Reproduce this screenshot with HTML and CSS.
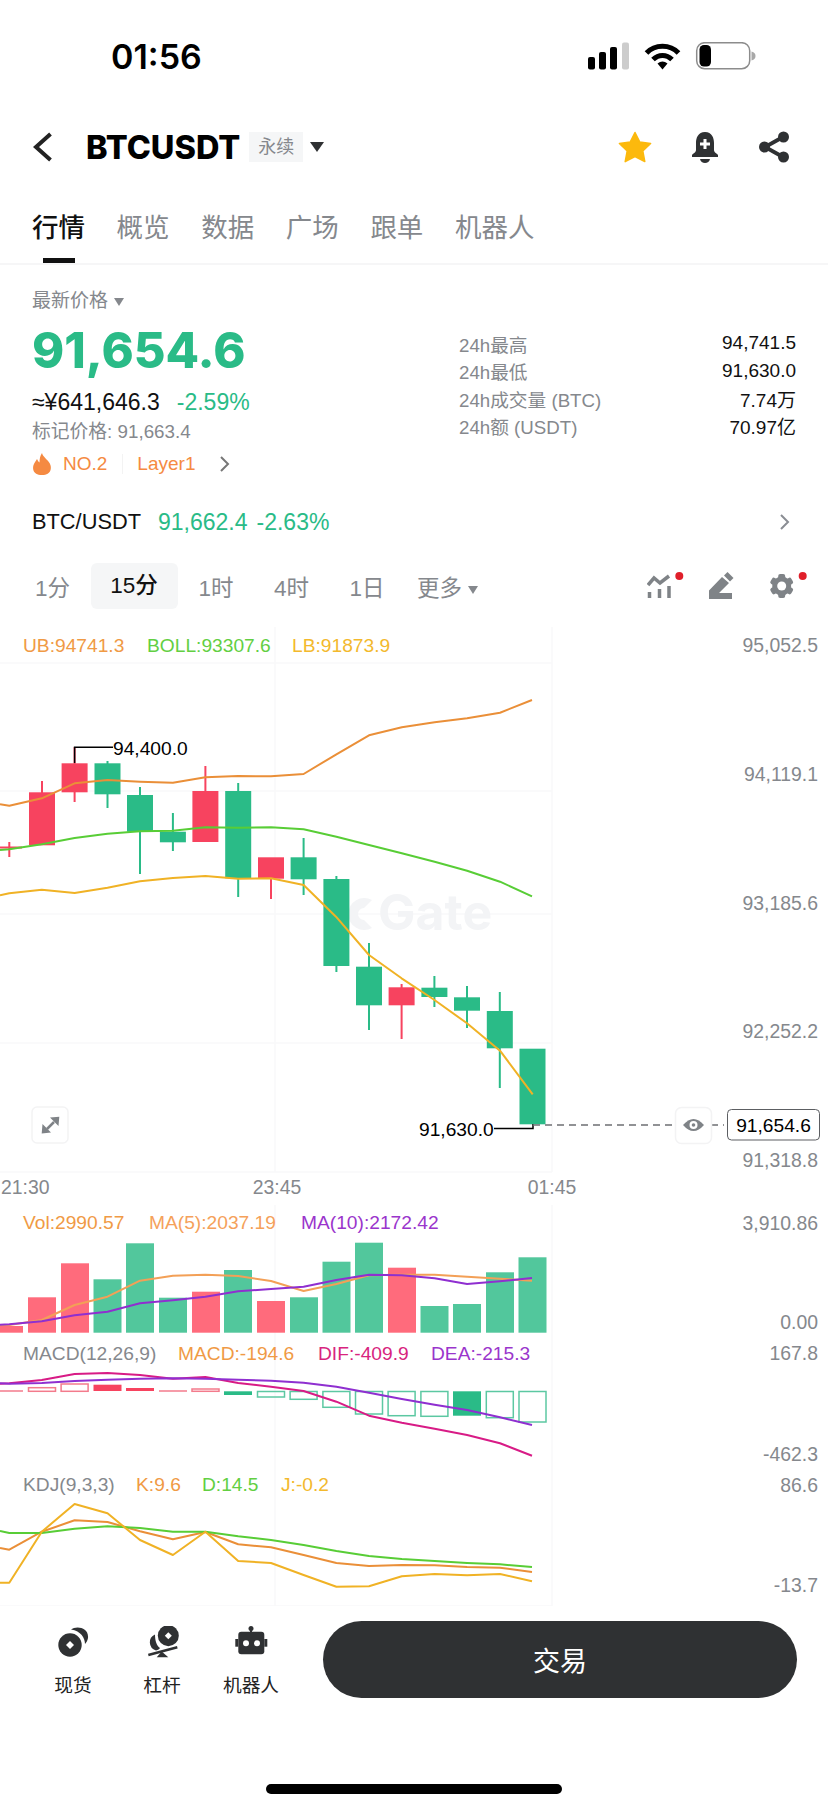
FILE: index.html
```html
<!DOCTYPE html>
<html lang="zh-CN">
    <head>
        <meta charset="utf-8">
        <title>BTCUSDT</title>
        <link rel="stylesheet" href="styles.css">
    </head>
    <body>
        <main class="phone">
            <!-- Status bar -->
            <div class="status">
                <span class="clock">01:56</span>
                <svg class="status-icons" width="170" height="28" viewBox="0 0 170 28">
                    <rect x="0" y="15" width="7" height="12.5" rx="2" fill="#000"/>
                    <rect x="11" y="10" width="7" height="17.5" rx="2" fill="#000"/>
                    <rect x="22" y="5" width="7" height="22.5" rx="2" fill="#000"/>
                    <rect x="34" y="0.5" width="7" height="27" rx="2" fill="#ccc"/>
                    <g transform="translate(56 0.5)">
                        <path d="M2.5 10.5C11 1.5 26 1.5 34.5 10.5" fill="none" stroke="#000" stroke-width="5"/>
                        <path d="M9 17C14.5 11.5 22.5 11.5 28 17" fill="none" stroke="#000" stroke-width="5"/>
                        <path d="M13.5 21Q18.5 17 23.5 21L18.5 27Z" fill="#000"/>
                    </g>
                    <rect x="108.7" y="0.7" width="53" height="26" rx="8" fill="none" stroke="#8c8c8c" stroke-width="1.5"/>
                    <rect x="111.5" y="3" width="11.5" height="21.5" rx="4.5" fill="#000"/>
                    <path d="M163.5 9.5C166.5 10 167.5 12 167.5 14S166.5 18 163.5 18.5Z" fill="#a8a8a8"/>
                </svg>
            </div>

            <!-- Nav -->
            <div class="nav">
                <svg class="back" width="22" height="30" viewBox="0 0 22 30">
                    <path d="M18.5 2L4 15L18.5 28" fill="none" stroke="#222" stroke-width="4"/>
                </svg>
                <span class="symbol">BTCUSDT</span>
                <span class="tag">永续</span>
                <span class="caret caret-dark"></span>
                <div class="nav-icons">
                    <svg width="34" height="32" viewBox="0 0 34 32">
                        <path d="M17 1.5L21.8 11L32.6 12.5L24.8 20L26.8 30.6L17 25.5L7.2 30.6L9.2 20L1.4 12.5L12.2 11Z" fill="#fcb90d" stroke="#fcb90d" stroke-width="1.5" stroke-linejoin="round"/>
                    </svg>
                    <svg width="30" height="32" viewBox="0 0 30 32">
                        <path d="M15 1C8 1 6 7 6 12V19C6 21.5 3.5 22 2 24V26H28V24C26.5 22 24 21.5 24 19V12C24 7 22 1 15 1Z" fill="#2f3133"/>
                        <path d="M10 28H20C19.5 30.5 17.5 32 15 32S10.5 30.5 10 28Z" fill="#2f3133"/>
                        <path d="M15 8V18M10 13H20" stroke="#fff" stroke-width="3"/>
                    </svg>
                    <svg width="32" height="32" viewBox="0 0 32 32">
                        <path d="M25 6L7 16L25 26" fill="none" stroke="#2f3133" stroke-width="4"/>
                        <circle cx="25.5" cy="6" r="5.5" fill="#2f3133"/>
                        <circle cx="6.5" cy="16" r="5.5" fill="#2f3133"/>
                        <circle cx="25.5" cy="26" r="5.5" fill="#2f3133"/>
                    </svg>
                </div>
            </div>

            <!-- Tabs -->
            <div class="tabs">
                <span class="tab tab-active">行情</span>
                <span class="tab">概览</span>
                <span class="tab">数据</span>
                <span class="tab">广场</span>
                <span class="tab">跟单</span>
                <span class="tab">机器人</span>
            </div>

            <!-- Price -->
            <section class="summary">
                <div class="summary-left">
                    <div class="latest">最新价格<span class="caret caret-small"></span></div>
                    <div class="price">91,654.6</div>
                    <div class="cny">≈¥641,646.3<span class="up-pct">-2.59%</span></div>
                    <div class="mark">标记价格: 91,663.4</div>
                    <div class="rank">
                        <svg width="20" height="22" viewBox="0 0 20 22">
                            <path d="M10 0C11 4 15 6 17.5 10C20 14 20 22 10 22C0 22 0 14 2.5 10C3.5 8 4.5 7 5 6C6 8 6.5 9 7.5 9.5C7.5 6 8 3 10 0Z" fill="#f58a42"/>
                        </svg>
                        <span class="rank-no">NO.2</span>
                        <span class="rank-sep"></span>
                        <span>Layer1</span>
                        <svg class="rank-arrow" width="11" height="18" viewBox="0 0 11 18">
                            <path d="M2 2L9 9L2 16" fill="none" stroke="#777" stroke-width="2"/>
                        </svg>
                    </div>
                </div>
                <dl class="stats">
                    <div class="stat"><dt>24h最高</dt><dd>94,741.5</dd></div>
                    <div class="stat"><dt>24h最低</dt><dd>91,630.0</dd></div>
                    <div class="stat"><dt>24h成交量 (BTC)</dt><dd>7.74万</dd></div>
                    <div class="stat"><dt>24h额 (USDT)</dt><dd>70.97亿</dd></div>
                </dl>
            </section>

            <div class="pair">
                <span class="pair-name">BTC/USDT</span>
                <span class="pair-price">91,662.4</span>
                <span class="pair-pct">-2.63%</span>
                <svg class="pair-arrow" width="11" height="18" viewBox="0 0 11 18">
                    <path d="M2 2L9 9L2 16" fill="none" stroke="#8a8d93" stroke-width="2"/>
                </svg>
            </div>

            <!-- Interval row -->
            <div class="intervals">
                <span class="interval">1分</span>
                <span class="interval interval-active">15分</span>
                <span class="interval">1时</span>
                <span class="interval">4时</span>
                <span class="interval">1日</span>
                <span class="interval interval-more">更多<span class="caret caret-small"></span></span>
                <svg class="tools" width="165" height="34" viewBox="0 0 165 34">
                    <!-- indicators -->
                    <path d="M1 17L7 10L13 15L22 8" fill="none" stroke="#7f8387" stroke-width="3.5"/>
                    <path d="M2.5 24V30M12.5 21V30M22 18V30" fill="none" stroke="#7f8387" stroke-width="3.5"/>
                    <circle cx="32.3" cy="8" r="4" fill="#e01f2a"/>
                    <!-- draw -->
                    <path d="M62 31V22.5L75 9L82 15L72 25H85V31Z" fill="#7f8387"/>
                    <path d="M77 7.5L80.5 4L86.5 10L83 13.5Z" fill="#7f8387"/>
                    <!-- settings -->
                    <g transform="translate(134.7 18)" fill="#7f8387">
                        <circle r="9.5"/>
                        <rect x="-3.5" y="-12" width="7" height="24" rx="2"/>
                        <rect x="-3.5" y="-12" width="7" height="24" rx="2" transform="rotate(60)"/>
                        <rect x="-3.5" y="-12" width="7" height="24" rx="2" transform="rotate(120)"/>
                        <circle r="4.5" fill="#fff"/>
                    </g>
                    <circle cx="155.7" cy="8" r="4" fill="#e01f2a"/>
                </svg>
            </div>

            <!-- Chart -->
            <svg class="chart" width="828" height="981" viewBox="0 625 828 981">
                <!-- grid -->
                <g class="grid">
                    <path d="M0 663H552M0 791H552M0 914H552M0 1043H552M0 1172H552"/>
                    <path d="M275 627V1172M552 627V1172"/>
                    <path d="M0 1606H552M552 1205V1606M275 1205V1606"/>
                </g>

                <!-- watermark -->
                <text class="watermark" x="378" y="930">Gate</text>
                <path class="watermark-logo" d="M372 900A16 16 0 1 0 372 928L364 920A6 6 0 1 1 364 908Z"/>

                <!-- labels above the candles -->
                <text class="lbl c-orange" x="23" y="651.5">UB:94741.3</text>
                <text class="lbl c-green" x="147" y="651.5">BOLL:93307.6</text>
                <text class="lbl c-yellow" x="292" y="651.5">LB:91873.9</text>

                <!-- candles -->
                <g class="red">
                    <rect x="8.3" y="842" width="2" height="15"/><rect x="0" y="846.5" width="22" height="2"/>
                    <rect x="41" y="781" width="2" height="14"/><rect x="29" y="792.3" width="26" height="53"/>
                    <rect x="73.6" y="747" width="2" height="55"/><rect x="61.6" y="763.3" width="26" height="29"/>
                    <rect x="204.4" y="766" width="2" height="30"/><rect x="192.4" y="791" width="26" height="51"/>
                    <rect x="270" y="870" width="2" height="29"/><rect x="258" y="857.3" width="26" height="21.4"/>
                    <rect x="400.6" y="984" width="2" height="55"/><rect x="388.6" y="987.3" width="26" height="18"/>
                </g>
                <g class="green">
                    <rect x="106.5" y="761" width="2" height="47"/><rect x="94.5" y="763.3" width="26" height="31"/>
                    <rect x="139" y="787" width="2" height="87"/><rect x="127" y="795" width="26" height="36.7"/>
                    <rect x="171.9" y="813" width="2" height="38"/><rect x="159.9" y="831.7" width="26" height="10.6"/>
                    <rect x="237.2" y="783" width="2" height="114"/><rect x="225.2" y="791" width="26" height="87.3"/>
                    <rect x="302.6" y="838" width="2" height="57"/><rect x="290.6" y="857.3" width="26" height="22"/>
                    <rect x="335.4" y="876" width="2" height="96"/><rect x="323.4" y="879" width="26" height="87"/>
                    <rect x="368" y="943" width="2" height="87"/><rect x="356" y="966.7" width="26" height="38.6"/>
                    <rect x="433.4" y="976" width="2" height="31"/><rect x="421.4" y="987.7" width="26" height="9.3"/>
                    <rect x="466" y="986" width="2" height="42"/><rect x="454" y="997.3" width="26" height="13.4"/>
                    <rect x="498.8" y="992" width="2" height="96"/><rect x="486.8" y="1011" width="26" height="37.3"/>
                    <rect x="519.5" y="1048.7" width="26" height="75.6"/>
                </g>

                <!-- BOLL -->
                <polyline class="line l-orange" points="0,804.3 9.3,805.7 41.8,798.3 74.6,783.3 107.5,780 140,781.7 172.9,782.7 205.4,777.3 238.2,776 271,776.3 303.6,774 336.4,754.3 369,735.3 401.8,727.3 434.6,722.3 467.1,718.3 500,712.7 532,700"/>
                <polyline class="line l-green" points="0,850 9.3,849.3 41.8,844.3 74.6,838 107.5,833.7 140,831.3 172.9,830.7 205.4,827.3 238.2,827.7 271,827.3 303.6,829.3 336.4,836.7 369,845 401.8,853.3 434.6,861.7 467.1,870.7 500,881.7 532,896.3"/>
                <polyline class="line l-yellow" points="0,895.3 9.3,893.3 41.8,889.7 74.6,893 107.5,887.7 140,881.3 172.9,878 205.4,876 238.2,878.7 271,878.3 303.6,885 336,916.7 369,955 401.6,978.3 434.5,1000 467,1023.3 500,1050.7 532.7,1094.3"/>

                <!-- high / low markers -->
                <path class="marker" d="M74.6 763V747.3H113"/>
                <text class="lbl c-black" x="113" y="754.5">94,400.0</text>
                <path class="marker" d="M494 1128.5H533V1124"/>
                <text class="lbl c-black" x="419" y="1135.5">91,630.0</text>

                <!-- latest price line -->
                <path class="dash" d="M533 1125H675M711 1125H724"/>
                <rect class="eye-box" x="675.5" y="1107.5" width="36" height="36" rx="6"/>
                <path d="M683 1125Q693.5 1113 704 1125Q693.5 1137 683 1125Z" fill="#7f8387"/>
                <circle cx="693.5" cy="1125" r="4" fill="#fff"/>
                <circle cx="693.5" cy="1125" r="1.8" fill="#7f8387"/>
                <rect class="price-box" x="727.5" y="1109.5" width="92" height="30.5" rx="4"/>
                <text class="lbl c-black" x="773.5" y="1131.5" text-anchor="middle">91,654.6</text>

                <!-- expand -->
                <rect class="eye-box" x="32" y="1107" width="36" height="36" rx="5"/>
                <path d="M59.3 1116.7L50 1117.5L58.5 1126ZM41.7 1133.5L42.5 1124L51 1132.5Z" fill="#7f8387"/>
                <path d="M54 1122L47 1129" stroke="#7f8387" stroke-width="2.5"/>

                <!-- right axis -->
                <g class="axis">
                    <text x="818" y="651.5">95,052.5</text>
                    <text x="818" y="780.5">94,119.1</text>
                    <text x="818" y="909.5">93,185.6</text>
                    <text x="818" y="1038">92,252.2</text>
                    <text x="818" y="1166.5">91,318.8</text>
                    <text x="818" y="1229.5">3,910.86</text>
                    <text x="818" y="1329">0.00</text>
                    <text x="818" y="1360">167.8</text>
                    <text x="818" y="1460.5">-462.3</text>
                    <text x="818" y="1491.5">86.6</text>
                    <text x="818" y="1591.5">-13.7</text>
                </g>

                <!-- time axis -->
                <g class="times">
                    <text x="1" y="1194">21:30</text>
                    <text x="277" y="1194" text-anchor="middle">23:45</text>
                    <text x="552" y="1194" text-anchor="middle">01:45</text>
                </g>

                <!-- volume -->
                <text class="lbl c-orange" x="23" y="1228.5">Vol:2990.57</text>
                <text class="lbl c-orange-soft" x="149" y="1228.5">MA(5):2037.19</text>
                <text class="lbl c-purple" x="301" y="1228.5">MA(10):2172.42</text>
                <g class="vol-red">
                    <rect x="0" y="1326" width="23" height="6.7"/>
                    <rect x="28" y="1297.3" width="28" height="35.4"/>
                    <rect x="61" y="1263.3" width="28" height="69.4"/>
                    <rect x="192" y="1291.7" width="28" height="41"/>
                    <rect x="257" y="1301" width="28" height="31.7"/>
                    <rect x="388" y="1267.7" width="28" height="65"/>
                </g>
                <g class="vol-green">
                    <rect x="93.5" y="1279.3" width="28" height="53.4"/>
                    <rect x="126" y="1243.3" width="28" height="89.4"/>
                    <rect x="159" y="1297.7" width="28" height="35"/>
                    <rect x="224" y="1270" width="28" height="62.7"/>
                    <rect x="290" y="1297.3" width="28" height="35.4"/>
                    <rect x="322.5" y="1261.7" width="28" height="71"/>
                    <rect x="355" y="1242.7" width="28" height="90"/>
                    <rect x="420.5" y="1306" width="28" height="26.7"/>
                    <rect x="453" y="1304" width="28" height="28.7"/>
                    <rect x="486" y="1272.3" width="28" height="60.4"/>
                    <rect x="518.5" y="1257.3" width="28" height="75.4"/>
                </g>
                <polyline class="line l-orange-soft" points="0,1325 9.3,1325 41.8,1320 74.6,1305 107.5,1296.7 140,1280.7 172.9,1275.7 205.4,1274.7 238.2,1276 271,1281 303.6,1291 336.4,1284 369,1275.3 401.8,1274.7 434.6,1274.7 467.1,1276.7 500,1278.7 532,1280.7"/>
                <polyline class="line l-purple" points="0,1324.7 9.3,1324.3 41.8,1321.3 74.6,1315.3 107.5,1311.7 140,1303.3 172.9,1300.3 205.4,1296.7 238.2,1291.3 271,1289 303.6,1286.7 336.4,1280 369,1274.7 401.8,1275.3 434.6,1278.3 467.1,1284 500,1281.3 532,1278"/>

                <!-- MACD -->
                <text class="lbl c-grey" x="23" y="1359.5">MACD(12,26,9)</text>
                <text class="lbl c-orange" x="178" y="1359.5">MACD:-194.6</text>
                <text class="lbl c-pink" x="318" y="1359.5">DIF:-409.9</text>
                <text class="lbl c-purple" x="431" y="1359.5">DEA:-215.3</text>
                <g class="hist-red-o">
                    <path d="M0 1391H23"/>
                    <rect x="28.5" y="1387.7" width="27" height="3.6"/>
                    <rect x="61.1" y="1384" width="27" height="7.3"/>
                    <path d="M159 1391H187"/>
                    <rect x="192" y="1389" width="27" height="2.3"/>
                </g>
                <rect class="red" x="93.5" y="1384.7" width="28" height="6.3"/>
                <rect class="red" x="126" y="1388" width="28" height="3"/>
                <rect class="green" x="224" y="1391.3" width="28" height="3.7"/>
                <g class="hist-green-o">
                    <rect x="257.5" y="1391.5" width="27" height="5.5"/>
                    <rect x="290.1" y="1391.5" width="27" height="7.8"/>
                    <rect x="322.9" y="1391.5" width="27" height="15.8"/>
                    <rect x="355.5" y="1391.5" width="27" height="22.5"/>
                    <rect x="388.1" y="1391.5" width="27" height="24.2"/>
                    <rect x="420.9" y="1391.5" width="27" height="24.8"/>
                    <rect x="486.3" y="1391.5" width="27" height="26.2"/>
                    <rect x="519" y="1391.5" width="27" height="30.5"/>
                </g>
                <rect class="green" x="453" y="1391.3" width="28" height="24.4"/>
                <polyline class="line l-pink" points="0,1383.7 9.3,1383.3 41.8,1380 74.6,1374 107.5,1373 140,1375 172.9,1378.7 205.4,1377 238.2,1383 271,1386.7 303.6,1391 336.4,1401.7 369,1415.7 401.8,1422.7 434.6,1428.7 467.1,1435 500,1443.3 532,1455.7"/>
                <polyline class="line l-purple" points="0,1383.3 9.3,1383.7 41.8,1383 74.6,1381 107.5,1379.7 140,1378.7 172.9,1378.3 205.4,1378.7 238.2,1379.7 271,1380.7 303.6,1382.7 336.4,1386.7 369,1392.7 401.8,1399 434.6,1404.7 467.1,1410 500,1417.3 532,1425"/>

                <!-- KDJ -->
                <text class="lbl c-grey" x="23" y="1490.5">KDJ(9,3,3)</text>
                <text class="lbl c-orange" x="136" y="1490.5">K:9.6</text>
                <text class="lbl c-green" x="202" y="1490.5">D:14.5</text>
                <text class="lbl c-yellow" x="281" y="1490.5">J:-0.2</text>
                <polyline class="line l-orange" points="0,1548 9.3,1549.7 41.8,1531.7 74.6,1520.3 107.5,1522 140,1531.3 172.9,1539.3 205.4,1532 238.2,1544.3 271,1547.3 303.6,1555 336.4,1563 369,1566 401.8,1565 434.6,1565.3 467.1,1567 500,1567.7 532,1572"/>
                <polyline class="line l-green" points="0,1531 9.3,1533 41.8,1533 74.6,1528.7 107.5,1526.3 140,1528 172.9,1531.7 205.4,1531.7 238.2,1536.3 271,1540 303.6,1545 336.4,1551 369,1556 401.8,1559 434.6,1561 467.1,1563 500,1564.3 532,1567"/>
                <polyline class="line l-yellow" points="0,1582.7 9.3,1582.7 41.8,1531.7 74.6,1504 107.5,1513.3 140,1540 172.9,1555 205.4,1531.7 238.2,1561 271,1563 303.6,1575 336.4,1586.7 369,1586.3 401.8,1576.3 434.6,1574 467.1,1575.3 500,1574 532,1581.3"/>
            </svg>

            <!-- Bottom bar -->
            <div class="bottom">
                <div class="actions">
                    <div class="action">
                        <svg width="34" height="34" viewBox="0 0 34 34">
                            <circle cx="14" cy="19" r="11.7" fill="#2f3133"/>
                            <path d="M14 15L18 19L14 23L10 19Z" fill="#fff"/>
                            <path d="M15 3.5C20 -0.5 33 1 32 12C31.5 15 30 17 29 18C29 12 25 5 15 3.5Z" fill="#2f3133"/>
                        </svg>
                        <span>现货</span>
                    </div>
                    <div class="action">
                        <svg width="34" height="34" viewBox="0 0 34 34">
                            <circle cx="23.3" cy="9.7" r="10.5" fill="#2f3133"/>
                            <path d="M23.3 6.2L26.8 9.7L23.3 13.2L19.8 9.7Z" fill="#fff"/>
                            <path d="M10 8.5A8.5 8.5 0 0 0 11 24.5C13 24 14.5 23 15 22C11.5 20 10 14 10 8.5Z" fill="#2f3133"/>
                            <path d="M3.3 29L32.3 21.3" stroke="#2f3133" stroke-width="2.5"/>
                            <path d="M16.7 25.5L11.7 31.3H23.3Z" fill="#2f3133"/>
                        </svg>
                        <span>杠杆</span>
                    </div>
                    <div class="action">
                        <svg width="34" height="34" viewBox="0 0 34 34">
                            <circle cx="17" cy="2.5" r="2.5" fill="#2f3133"/>
                            <rect x="16" y="3" width="2" height="4" fill="#2f3133"/>
                            <rect x="4.3" y="5.7" width="26" height="22.6" rx="3" fill="#2f3133"/>
                            <rect x="1.3" y="13" width="3" height="7.7" fill="#2f3133"/>
                            <rect x="30.3" y="13" width="3" height="7.7" fill="#2f3133"/>
                            <circle cx="12" cy="17.3" r="3" fill="#fff"/>
                            <circle cx="23" cy="17.3" r="3" fill="#fff"/>
                        </svg>
                        <span>机器人</span>
                    </div>
                </div>
                <button class="trade">交易</button>
            </div>
            <div class="home-wrap"><div class="home"></div></div>
        </main>
    </body>
</html>
```
FILE: styles.css
```css
* {
    box-sizing: border-box;
}

body {
    margin: 0;
    background-color: #fff;
    font-family: "Liberation Sans", "Noto Sans CJK SC", sans-serif;
    color: #111;
}

.phone {
    width: 828px;
    height: 1795px;
    overflow: hidden;
}

/* Status bar */
.status {
    height: 112px;
    padding: 0 70px 0 111px;
    display: flex;
    align-items: center;
    justify-content: space-between;
}

.clock {
    font-family: Inter, sans-serif;
    font-size: 34px;
    font-weight: 600;
    color: #000;
}

.status-icons {
    display: block;
}

/* Nav */
.nav {
    height: 70px;
    padding: 0 38px 0 32px;
    display: flex;
    align-items: center;
}

.symbol {
    margin-left: 32px;
    font-family: Inter, sans-serif;
    font-size: 32.5px;
    font-weight: 800;
    color: #000;
}

.tag {
    margin-left: 9px;
    width: 54px;
    height: 30px;
    background-color: #f5f6f7;
    color: #85888d;
    font-size: 18px;
    line-height: 30px;
    text-align: center;
}

.caret {
    display: inline-block;
    border-style: solid;
    border-color: transparent;
    border-bottom-width: 0;
}

.caret-dark {
    margin-left: 7px;
    border-width: 10px 7.5px 0;
    border-top-color: #2f3133;
}

.caret-small {
    margin-left: 6px;
    vertical-align: middle;
    border-width: 8px 5.5px 0;
    border-top-color: #85888d;
}

.nav-icons {
    margin-left: auto;
    display: flex;
    align-items: center;
    gap: 38px;
}

.nav-icons svg {
    display: block;
}

/* Tabs */
.tabs {
    height: 83px;
    padding: 28px 32px 0;
    display: flex;
    gap: 31.6px;
    border-bottom: 2px solid #f6f6f7;
}

.tab {
    font-size: 26.5px;
    line-height: 36px;
    color: #85888d;
}

.tab-active {
    color: #111;
    font-weight: 500;
}

.tab-active::after {
    content: "";
    display: block;
    width: 32px;
    height: 5px;
    margin: 12px auto 0;
    background-color: #111;
}

/* Price summary */
.summary {
    height: 213px;
    padding: 0 32px;
    display: flex;
    justify-content: space-between;
}

.summary-left {
    padding-top: 24px;
}

.latest {
    font-size: 19px;
    line-height: 24px;
    color: #85888d;
}

.price {
    margin-top: 10px;
    font-family: Inter, sans-serif;
    font-size: 48.8px;
    font-weight: 800;
    line-height: 56px;
    color: #2abb87;
}

.cny {
    margin-top: 9px;
    font-size: 23px;
    line-height: 28px;
    color: #111;
}

.up-pct {
    margin-left: 17px;
    color: #2abb87;
}

.mark {
    margin-top: 4px;
    font-size: 18.8px;
    line-height: 24px;
    color: #85888d;
}

.rank {
    margin-top: 6px;
    height: 28px;
    display: flex;
    align-items: center;
    font-size: 19px;
    color: #f58a42;
}

.rank-no {
    margin-left: 11px;
}

.rank-sep {
    width: 1px;
    height: 20px;
    margin: 0 14px 0 15px;
    background-color: #f3f3f3;
}

.rank-arrow {
    margin-left: 24px;
}

.stats {
    width: 337px;
    margin: 64.5px 0 0;
}

.stat {
    height: 27.5px;
    display: flex;
    align-items: center;
    justify-content: space-between;
    font-size: 19px;
}

.stat dt {
    font-size: 18.7px;
    color: #85888d;
}

.stat dd {
    margin: 0;
    color: #111;
}

/* Spot pair row */
.pair {
    height: 56px;
    margin-top: 16px;
    padding: 0 38px 0 32px;
    display: flex;
    align-items: center;
    font-size: 23px;
    color: #2abb87;
}

.pair-name {
    font-size: 21.8px;
    color: #111;
}

.pair-price {
    margin-left: 17px;
}

.pair-pct {
    margin-left: 9px;
}

.pair-arrow {
    margin-left: auto;
}

/* Interval row */
.intervals {
    height: 46px;
    margin-top: 13px;
    padding-left: 35px;
    position: relative;
    display: flex;
    align-items: center;
    font-size: 22.5px;
    color: #85888d;
}

.interval {
    margin-right: 40.5px;
    white-space: nowrap;
}

.interval-active {
    width: 87px;
    height: 46px;
    margin: 0 21px 0 -20px;
    border-radius: 6px;
    background-color: #f5f6f7;
    color: #111;
    line-height: 46px;
    text-align: center;
    font-weight: 500;
}

.interval-more {
    margin-left: -8px;
}

.tools {
    position: absolute;
    left: 647px;
    top: 5px;
}

/* Chart */
.chart {
    display: block;
    margin-top: 16px;
}

.grid path {
    fill: none;
    stroke: #f9f9fa;
    stroke-width: 1.5;
}

.watermark {
    font-family: Inter, sans-serif;
    font-size: 50px;
    font-weight: 700;
    fill: #f3f4f6;
}

.watermark-logo {
    fill: #f3f4f6;
}

.lbl {
    font-size: 19.2px;
}

.c-orange { fill: #f09a45; }
.c-orange-soft { fill: #f5a15a; }
.c-green { fill: #62cf42; }
.c-yellow { fill: #f3b92d; }
.c-purple { fill: #9a35cc; }
.c-pink { fill: #d8247e; }
.c-grey { fill: #85888d; }
.c-black { fill: #000; }

.red { fill: #f7435f; }
.green { fill: #2abb87; }
.vol-red { fill: #ff6b7c; }
.vol-green { fill: #52c79c; }

.line {
    fill: none;
    stroke-width: 2;
    stroke-linejoin: round;
}

.l-orange { stroke: #ea8f38; }
.l-orange-soft { stroke: #f3a057; }
.l-green { stroke: #58cd36; }
.l-yellow { stroke: #f0b225; }
.l-purple { stroke: #8f2fd0; }
.l-pink { stroke: #d81b86; }

.marker {
    fill: none;
    stroke: #000;
    stroke-width: 1.5;
}

.dash {
    fill: none;
    stroke: #6d6f73;
    stroke-width: 1.5;
    stroke-dasharray: 7 5;
}

.eye-box {
    fill: #fff;
    stroke: #f3f3f4;
    stroke-width: 1.5;
}

.price-box {
    fill: #fff;
    stroke: #5c5e62;
    stroke-width: 1;
}

.axis text {
    font-size: 19.4px;
    fill: #85888d;
    text-anchor: end;
}

.times text {
    font-size: 19.4px;
    fill: #85888d;
}

.hist-red-o rect,
.hist-red-o path {
    fill: none;
    stroke: #f37b8c;
    stroke-width: 1.5;
}

.hist-green-o rect {
    fill: none;
    stroke: #5cc8a2;
    stroke-width: 1.5;
}

/* Bottom bar */
.bottom {
    height: 94px;
    margin-top: 15px;
    padding: 0 31px 0 0;
    display: flex;
    justify-content: space-between;
}

.actions {
    display: flex;
    padding: 5px 0 0 28.5px;
}

.action {
    width: 89px;
    height: 80px;
    display: flex;
    flex-direction: column;
    align-items: center;
    font-size: 18.7px;
    color: #222;
}

.action svg {
    display: block;
    margin-bottom: 10px;
}

.trade {
    width: 474px;
    height: 77px;
    border: none;
    border-radius: 39px;
    background-color: #2f3133;
    color: #fff;
    font-family: inherit;
    font-size: 27px;
}

.home-wrap {
    padding-top: 69px;
    display: flex;
    justify-content: center;
}

.home {
    width: 296px;
    height: 10px;
    border-radius: 5px;
    background-color: #000;
}
```
